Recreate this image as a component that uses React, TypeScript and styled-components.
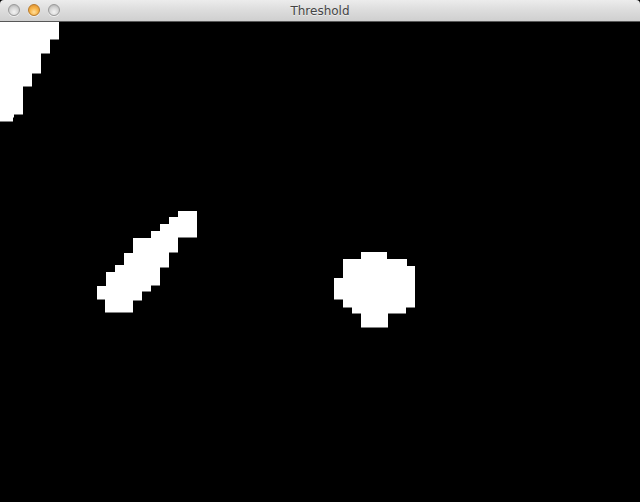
import React from 'react';
import styled, { createGlobalStyle } from 'styled-components';

const GlobalStyle = createGlobalStyle`
  html, body {
    margin: 0;
    padding: 0;
    background: #000;
  }
  body {
    font-family: "DejaVu Sans", "Liberation Sans", sans-serif;
  }
`;

const Window = styled.div`
  width: 640px;
  height: 502px;
  display: flex;
  flex-direction: column;
  overflow: hidden;
  background: #000;
`;

const TitleBar = styled.div`
  position: relative;
  height: 21px;
  flex-shrink: 0;
  display: flex;
  align-items: center;
  justify-content: center;
  background: linear-gradient(to bottom, #ececec 0%, #dcdcdc 50%, #cfcfcf 100%);
  border-bottom: 1px solid #585858;
  border-radius: 4px 4px 0 0;
`;

const Lights = styled.div`
  position: absolute;
  left: 8px;
  top: 4px;
  display: flex;
  gap: 8px;
`;

const Light = styled.span<{ $active?: boolean }>`
  width: 12px;
  height: 12px;
  border-radius: 50%;
  box-sizing: border-box;
  border: 1px solid ${p => (p.$active ? '#b87a2a' : '#9a9a9a')};
  background: ${p =>
    p.$active
      ? 'radial-gradient(circle at 50% 70%, #ffe0a0 0%, #f8b64c 45%, #d8882a 100%)'
      : 'radial-gradient(circle at 50% 70%, #f4f4f4 0%, #d6d6d6 50%, #a9a9a9 100%)'};
  box-shadow: 0 1px 0 rgba(255, 255, 255, 0.6);
`;

const Title = styled.span`
  font-size: 12px;
  color: #454545;
  text-shadow: 0 1px 0 rgba(255, 255, 255, 0.6);
  margin-top: 1px;
`;

const Canvas = styled.div`
  flex: 1;
  background: #000;
  position: relative;
`;

const Drawing = styled.svg`
  display: block;
`;

type Row = [number, number, number, number]; // y1, y2, x1, x2 in page coords

const cornerBlob: Row[] = [
  [22, 39, 0, 59],
  [39, 53, 0, 50],
  [53, 73, 0, 41],
  [73, 86, 0, 32],
  [86, 114, 0, 23],
  [114, 117, 0, 14],
  [117, 121, 0, 13],
];

const stickBlob: Row[] = [
  [211, 217, 178, 197],
  [217, 224, 169, 197],
  [224, 231, 160, 197],
  [231, 237, 151, 197],
  [237, 238, 151, 178],
  [238, 252, 133, 178],
  [252, 253, 133, 169],
  [253, 265, 124, 169],
  [265, 267, 115, 169],
  [267, 272, 115, 160],
  [272, 285, 106, 160],
  [285, 286, 106, 151],
  [286, 291, 97, 151],
  [291, 299, 97, 142],
  [299, 300, 105, 142],
  [300, 312, 105, 133],
];

const roundBlob: Row[] = [
  [252, 259, 361, 387],
  [259, 266, 343, 407],
  [266, 278, 343, 415],
  [278, 299, 334, 415],
  [299, 307, 343, 415],
  [307, 313, 352, 406],
  [313, 327, 361, 388],
];

const Blob = ({ rows }: { rows: Row[] }) => (
  <>
    {rows.map(([y1, y2, x1, x2], i) => (
      <rect key={i} x={x1} y={y1} width={x2 - x1} height={y2 - y1 + 0.5} fill="#fff" />
    ))}
  </>
);

const App: React.FC = () => {
  return (
    <>
      <GlobalStyle />
      <Window>
        <TitleBar>
          <Lights>
            <Light />
            <Light $active />
            <Light />
          </Lights>
          <Title>Threshold</Title>
        </TitleBar>
        <Canvas>
          <Drawing width="640" height="480" viewBox="0 22 640 480">
            <Blob rows={cornerBlob} />
            <Blob rows={stickBlob} />
            <Blob rows={roundBlob} />
          </Drawing>
        </Canvas>
      </Window>
    </>
  );
};

export default App;
